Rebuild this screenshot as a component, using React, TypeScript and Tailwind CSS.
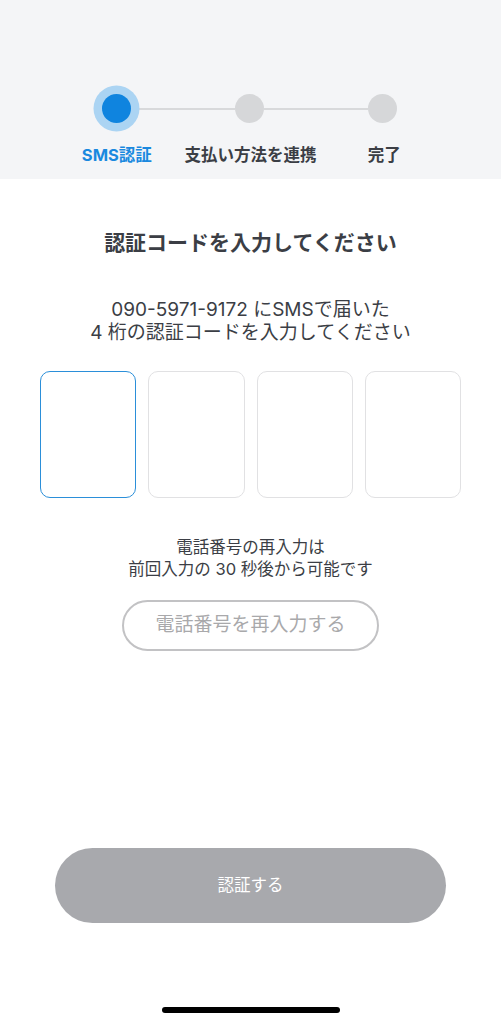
const STEPS = [
  { label: 'SMS認証', active: true },
  { label: '支払い方法を連携', active: false },
  { label: '完了', active: false },
]

function Stepper() {
  return (
    <div className="h-[179px] bg-[#f4f5f7] pt-[94px]">
      <div className="flex items-center pl-[102px]">
        <div className="w-[29px] h-[29px] rounded-full bg-[#0f84df] ring-[8.5px] ring-[#abd4f3] relative z-10" />
        <div className="w-[104px] h-[2px] bg-[#d8d9db]" />
        <div className="w-[29px] h-[29px] rounded-full bg-[#d6d7d9]" />
        <div className="w-[104px] h-[2px] bg-[#d8d9db]" />
        <div className="w-[29px] h-[29px] rounded-full bg-[#d6d7d9]" />
      </div>
      <div className="grid grid-cols-3 px-[50px] mt-[22px]">
        {STEPS.map(s => (
          <div
            key={s.label}
            className={
              s.active
                ? 'text-center text-[16.5px] leading-[20px] font-bold text-[#1a89df] whitespace-nowrap'
                : 'text-center text-[16.5px] leading-[20px] font-bold text-[#3b3e45] whitespace-nowrap'
            }
          >
            {s.label}
          </div>
        ))}
      </div>
    </div>
  )
}

export default function App() {
  return (
    <div
      className="w-[501px] h-[1024px] bg-white flex flex-col overflow-hidden"
      style={{ fontFamily: 'Inter, "Noto Sans CJK JP", sans-serif' }}
    >
      <Stepper />

      <h1 className="mt-[50px] text-center text-[21px] leading-[28px] font-bold text-[#3b3e45]">
        認証コードを入力してください
      </h1>

      <p className="mt-[41px] text-center text-[19px] leading-[23px] text-[#3b3e45] whitespace-nowrap">
        090-5971-9172 にSMSで届いた
        <br />
        4 桁の認証コードを入力してください
      </p>

      {/* code inputs */}
      <div className="mt-[27px] flex gap-[12px] px-[40px]">
        {[0, 1, 2, 3].map(i => (
          <div
            key={i}
            className={
              i === 0
                ? 'flex-1 h-[127px] rounded-[10px] border-[1.5px] border-[#2b8fd9]'
                : 'flex-1 h-[127px] rounded-[10px] border-[1.5px] border-[#e1e1e3]'
            }
          />
        ))}
      </div>

      <p className="mt-[38px] text-center text-[16.5px] leading-[22px] text-[#3b3e45]">
        電話番号の再入力は
        <br />
        前回入力の 30 秒後から可能です
      </p>

      <button className="mt-[20px] self-center w-[257px] h-[51px] rounded-full border-2 border-[#c2c2c4] text-[19px] text-[#a9a9ab]">
        電話番号を再入力する
      </button>

      <button className="mt-[197px] mx-[55px] h-[75px] rounded-full bg-[#a8a9ad] text-[16.5px] text-white">
        認証する
      </button>

      <div className="mt-[84px] self-center w-[178px] h-[6px] rounded-full bg-black" />
    </div>
  )
}
